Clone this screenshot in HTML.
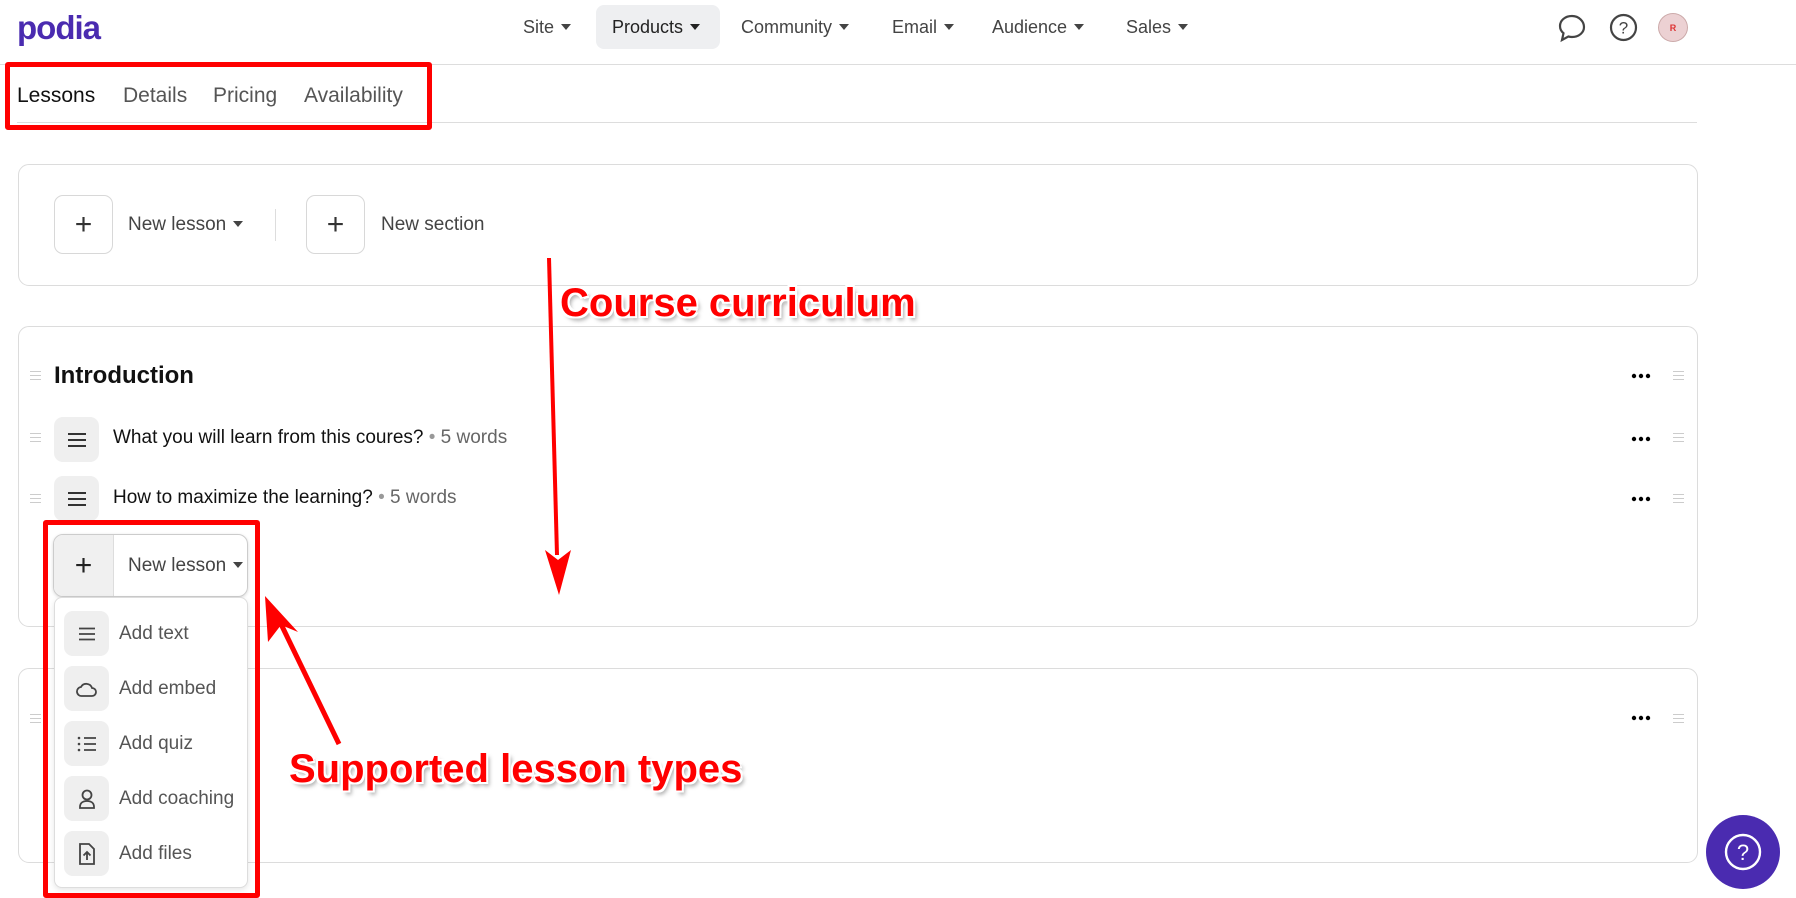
<!DOCTYPE html>
<html><head><meta charset="utf-8"><style>
*{box-sizing:border-box;margin:0;padding:0}
body{width:1796px;height:897px;background:#fff;font-family:"Liberation Sans",sans-serif;position:relative;overflow:hidden;color:#222}
.a{position:absolute}
.nav{font-size:18px;color:#444;top:16px;line-height:22px}
.car{display:inline-block;width:0;height:0;border-left:5px solid transparent;border-right:5px solid transparent;border-top:6px solid #444;margin-left:7px;vertical-align:3px}
.tab{top:84px;font-size:21px;color:#555}
.card{border:1px solid #dcdcdc;border-radius:11px;left:18px;width:1680px}
.pbtn{width:59px;height:59px;border:1px solid #d8d8d8;border-radius:9px;display:flex;align-items:center;justify-content:center;font-size:30px;color:#333;font-weight:300}
.t17{font-size:19px;color:#444}
.ic{width:45px;height:45px;background:#efefef;border-radius:9px;display:flex;align-items:center;justify-content:center}
.dots{width:20px;height:6px}
.hd{width:11px;height:9px;border-top:1.5px solid #ccc;border-bottom:1.5px solid #ccc}
.hd:after{content:"";display:block;margin-top:2.5px;border-top:1.5px solid #ccc}
.ann{color:#f00;font-weight:bold;font-size:40px;text-shadow:2px 2px 0 #fff,-2px -2px 0 #fff,2px -2px 0 #fff,-2px 2px 0 #fff,3px 4px 4px rgba(0,0,0,.35);white-space:nowrap}
</style></head><body>
<div class="a" style="left:0;top:64px;width:1796px;border-top:1px solid #ddd"></div>
<div class="a" style="left:17px;top:9px;font-size:33px;font-weight:bold;color:#4a2bb0;letter-spacing:-1px">podia</div>
<div class="a" style="left:596px;top:5px;width:124px;height:44px;background:#eeeff1;border-radius:8px"></div>
<div class="a nav" style="left:523px">Site<span class="car"></span></div>
<div class="a nav" style="left:612px;color:#222">Products<span class="car" style="border-top-color:#222"></span></div>
<div class="a nav" style="left:741px">Community<span class="car"></span></div>
<div class="a nav" style="left:892px">Email<span class="car"></span></div>
<div class="a nav" style="left:992px">Audience<span class="car"></span></div>
<div class="a nav" style="left:1126px">Sales<span class="car"></span></div>
<svg class="a" style="left:1557px;top:13px" width="30" height="30" viewBox="0 0 30 30"><path d="M15 3C8 3 3 7.5 3 13c0 3 1.3 5.4 3.5 7.2L5 27l6.3-3.5c1.2.3 2.4.5 3.7.5 7 0 12-4.5 12-10S22 3 15 3z" fill="none" stroke="#444" stroke-width="2.2"/></svg>
<svg class="a" style="left:1609px;top:13px" width="29" height="29" viewBox="0 0 29 29"><circle cx="14.5" cy="14.5" r="12.5" fill="none" stroke="#444" stroke-width="2.2"/><text x="14.5" y="20.5" font-size="17" text-anchor="middle" fill="#444" font-family="Liberation Sans">?</text></svg>
<div class="a" style="left:1658px;top:13px;width:30px;height:29px;border-radius:50%;background:#ecd1d3;border:1px solid #ccaaaa;color:#d33;font-size:9px;font-weight:bold;display:flex;align-items:center;justify-content:center">R</div>

<div class="a tab" style="left:17px;color:#111">Lessons</div>
<div class="a tab" style="left:123px">Details</div>
<div class="a tab" style="left:213px">Pricing</div>
<div class="a tab" style="left:304px">Availability</div>
<div class="a" style="left:17px;top:122px;width:1680px;border-top:1px solid #ddd"></div>
<div class="a" style="left:5px;top:62px;width:427px;height:68px;border:5px solid #f00;border-radius:3px"></div>

<div class="a card" style="top:164px;height:122px"></div>
<div class="a pbtn" style="left:54px;top:195px">+</div>
<div class="a t17" style="left:128px;top:214px">New lesson<span class="car"></span></div>
<div class="a" style="left:275px;top:209px;height:32px;border-left:1px solid #ddd"></div>
<div class="a pbtn" style="left:306px;top:195px">+</div>
<div class="a t17" style="left:381px;top:214px">New section</div>

<div class="a card" style="top:326px;height:301px"></div>
<div class="a hd" style="left:30px;top:371px"></div>
<div class="a" style="left:54px;top:362px;font-size:24px;font-weight:bold;color:#111">Introduction</div>
<svg class="a dots" style="left:1631px;top:373px" viewBox="0 0 20 6"><circle cx="3" cy="3" r="2.2"/><circle cx="10" cy="3" r="2.2"/><circle cx="17" cy="3" r="2.2"/></svg><div class="a hd" style="left:1673px;top:371px"></div>
<div class="a hd" style="left:30px;top:433px"></div>
<div class="a ic" style="left:54px;top:417px"><svg width="20" height="16"><path d="M1 2h18M1 8h18M1 14h18" stroke="#333" stroke-width="2"/></svg></div>
<div class="a" style="left:113px;top:427px;font-size:19px;color:#111">What you will learn from this coures? <span style="color:#999">•</span> <span style="color:#666">5 words</span></div>
<svg class="a dots" style="left:1631px;top:436px" viewBox="0 0 20 6"><circle cx="3" cy="3" r="2.2"/><circle cx="10" cy="3" r="2.2"/><circle cx="17" cy="3" r="2.2"/></svg><div class="a hd" style="left:1673px;top:433px"></div>
<div class="a hd" style="left:30px;top:494px"></div>
<div class="a ic" style="left:54px;top:476px"><svg width="20" height="16"><path d="M1 2h18M1 8h18M1 14h18" stroke="#333" stroke-width="2"/></svg></div>
<div class="a" style="left:113px;top:487px;font-size:19px;color:#111">How to maximize the learning? <span style="color:#999">•</span> <span style="color:#666">5 words</span></div>
<svg class="a dots" style="left:1631px;top:496px" viewBox="0 0 20 6"><circle cx="3" cy="3" r="2.2"/><circle cx="10" cy="3" r="2.2"/><circle cx="17" cy="3" r="2.2"/></svg><div class="a hd" style="left:1673px;top:494px"></div>

<div class="a" style="left:53px;top:534px;width:195px;height:63px;border:1px solid #ccc;border-radius:10px;box-shadow:0 1px 3px rgba(0,0,0,.15)"></div>
<div class="a" style="left:54px;top:535px;width:60px;height:61px;background:#f0f0f0;border-radius:9px 0 0 9px;border-right:1px solid #ddd;display:flex;align-items:center;justify-content:center;font-size:30px;font-weight:300">+</div>
<div class="a t17" style="left:128px;top:555px">New lesson<span class="car"></span></div>

<div class="a card" style="top:668px;height:195px"></div>
<div class="a hd" style="left:30px;top:714px"></div>
<svg class="a dots" style="left:1631px;top:715px" viewBox="0 0 20 6"><circle cx="3" cy="3" r="2.2"/><circle cx="10" cy="3" r="2.2"/><circle cx="17" cy="3" r="2.2"/></svg><div class="a hd" style="left:1673px;top:714px"></div>

<div class="a" style="left:54px;top:597px;width:194px;height:291px;background:#fff;border:1px solid #ddd;border-radius:8px;box-shadow:0 2px 6px rgba(0,0,0,.1)"></div>
<div class="a ic" style="left:64px;top:611px"><svg width="18" height="14"><path d="M1 1.5h16M1 7h16M1 12.5h16" stroke="#444" stroke-width="1.8"/></svg></div>
<div class="a t17" style="left:119px;top:623px;color:#555">Add text</div>
<div class="a ic" style="left:64px;top:666px"><svg width="22" height="18" viewBox="0 0 22 18"><path d="M6 16h10a4 4 0 0 0 0-8 6 6 0 0 0-11-1 4.5 4.5 0 0 0 1 9z" fill="none" stroke="#444" stroke-width="1.8"/></svg></div>
<div class="a t17" style="left:119px;top:678px;color:#555">Add embed</div>
<div class="a ic" style="left:64px;top:721px"><svg width="20" height="16"><path d="M7 2h12M7 8h12M7 14h12" stroke="#444" stroke-width="1.8"/><circle cx="2" cy="2" r="1.3" fill="#444"/><circle cx="2" cy="8" r="1.3" fill="#444"/><circle cx="2" cy="14" r="1.3" fill="#444"/></svg></div>
<div class="a t17" style="left:119px;top:733px;color:#555">Add quiz</div>
<div class="a ic" style="left:64px;top:776px"><svg width="20" height="22" viewBox="0 0 20 22"><circle cx="10" cy="7" r="4.5" fill="none" stroke="#444" stroke-width="1.8"/><path d="M3 19c0-4 3-6 7-6s7 2 7 6v1H3z" fill="none" stroke="#444" stroke-width="1.8"/></svg></div>
<div class="a t17" style="left:119px;top:788px;color:#555">Add coaching</div>
<div class="a ic" style="left:64px;top:831px"><svg width="18" height="22" viewBox="0 0 18 22"><path d="M2 1h9l5 5v15H2z" fill="none" stroke="#444" stroke-width="1.8"/><path d="M9 17V9M5.5 12.5L9 9l3.5 3.5" fill="none" stroke="#444" stroke-width="1.8"/></svg></div>
<div class="a t17" style="left:119px;top:843px;color:#555">Add files</div>
<div class="a" style="left:43px;top:520px;width:217px;height:378px;border:5px solid #f00;border-radius:3px"></div>

<svg class="a" style="left:0;top:0" width="1796" height="897">
<path d="M549 258L557 555" stroke="#f00" stroke-width="4"/>
<path d="M545 550L559 595L571 550L558 560z" fill="#f00"/>
<path d="M339 744L280 622" stroke="#f00" stroke-width="5"/>
<path d="M265 596L268 642L281 625L298 632z" fill="#f00"/>
</svg>
<div class="a ann" style="left:560px;top:281px">Course curriculum</div>
<div class="a ann" style="left:289px;top:747px">Supported lesson types</div>

<div class="a" style="left:1706px;top:815px;width:74px;height:74px;border-radius:50%;background:#4a2bb0;display:flex;align-items:center;justify-content:center"><svg width="40" height="40"><circle cx="20" cy="20" r="17" fill="none" stroke="#fff" stroke-width="2.4"/><text x="20" y="28" font-size="22" text-anchor="middle" fill="#fff" font-family="Liberation Sans">?</text></svg></div>
</body></html>
